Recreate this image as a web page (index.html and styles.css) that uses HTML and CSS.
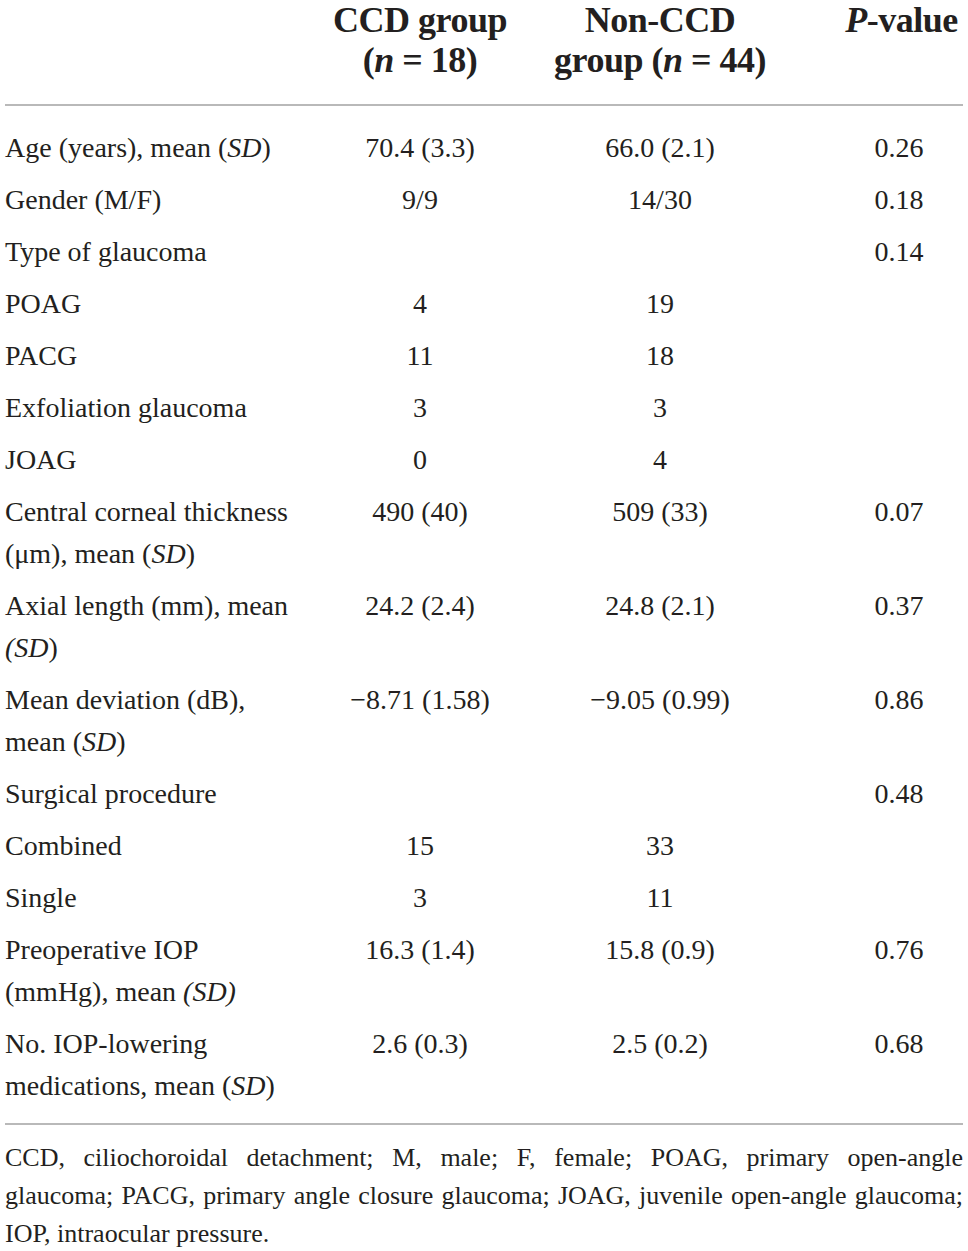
FILE: index.html
```html
<!DOCTYPE html>
<html lang="en">
<head>
  <meta charset="UTF-8">
  <meta name="viewport" content="width=device-width, initial-scale=1.0">
  <title>Baseline characteristics</title>
  <link rel="stylesheet" href="styles.css">
</head>
<body>
  <div class="sheet">
    <table class="data">
      <colgroup>
        <col class="c-label">
        <col class="c-ccd">
        <col class="c-non">
        <col class="c-p">
      </colgroup>
      <thead>
        <tr>
          <th></th>
          <th>CCD group<br>(<i>n</i> = 18)</th>
          <th>Non-CCD<br>group (<i>n</i> = 44)</th>
          <th class="pcol"><i>P</i>-value</th>
        </tr>
      </thead>
      <tbody>
        <tr class="first"><td>Age (years), mean (<i>SD</i>)</td><td>70.4 (3.3)</td><td>66.0 (2.1)</td><td class="pcol">0.26</td></tr>
        <tr><td>Gender (M/F)</td><td>9/9</td><td>14/30</td><td class="pcol">0.18</td></tr>
        <tr><td>Type of glaucoma</td><td></td><td></td><td class="pcol">0.14</td></tr>
        <tr><td>POAG</td><td>4</td><td>19</td><td class="pcol"></td></tr>
        <tr><td>PACG</td><td>11</td><td>18</td><td class="pcol"></td></tr>
        <tr><td>Exfoliation glaucoma</td><td>3</td><td>3</td><td class="pcol"></td></tr>
        <tr><td>JOAG</td><td>0</td><td>4</td><td class="pcol"></td></tr>
        <tr><td>Central corneal thickness<br>(&mu;m), mean (<i>SD</i>)</td><td>490 (40)</td><td>509 (33)</td><td class="pcol">0.07</td></tr>
        <tr><td>Axial length (mm), mean<br><i>(SD</i>)</td><td>24.2 (2.4)</td><td>24.8 (2.1)</td><td class="pcol">0.37</td></tr>
        <tr><td>Mean deviation (dB),<br>mean (<i>SD</i>)</td><td>&minus;8.71 (1.58)</td><td>&minus;9.05 (0.99)</td><td class="pcol">0.86</td></tr>
        <tr><td>Surgical procedure</td><td></td><td></td><td class="pcol">0.48</td></tr>
        <tr><td>Combined</td><td>15</td><td>33</td><td class="pcol"></td></tr>
        <tr><td>Single</td><td>3</td><td>11</td><td class="pcol"></td></tr>
        <tr><td>Preoperative IOP<br>(mmHg), mean <i>(SD)</i></td><td>16.3 (1.4)</td><td>15.8 (0.9)</td><td class="pcol">0.76</td></tr>
        <tr class="last"><td>No. IOP-lowering<br>medications, mean (<i>SD</i>)</td><td>2.6 (0.3)</td><td>2.5 (0.2)</td><td class="pcol">0.68</td></tr>
      </tbody>
    </table>
    <div class="notes">
      <span class="line just">CCD, ciliochoroidal detachment; M, male; F, female; POAG, primary open-angle</span>
      <span class="line just">glaucoma; PACG, primary angle closure glaucoma; JOAG, juvenile open-angle glaucoma;</span>
      <span class="line">IOP, intraocular pressure.</span>
    </div>
  </div>
</body>
</html>
```

FILE: styles.css
```css
body {
  margin: 0;
  background-color: #fff;
  color: #231f20;
  font-family: "Liberation Serif", "Times New Roman", serif;
}
.sheet {
  width: 958px;
  padding: 0 5px;
}
.data {
  width: 958px;
  border-collapse: collapse;
  table-layout: fixed;
}
.c-label {
  width: 305px;
}
.c-ccd {
  width: 220px;
}
.c-non {
  width: 260px;
}
.c-p {
  width: 173px;
}
.data th {
  font-size: 36px;
  line-height: 40px;
  font-weight: bold;
  text-align: center;
  vertical-align: top;
  padding: 0 0 24px 0;
  border-bottom: 2px solid #b9b9b9;
  letter-spacing: -0.5px;
}
.data td {
  font-size: 28px;
  line-height: 42px;
  padding: 5px 0;
  vertical-align: top;
  text-align: center;
}
.data td:first-child {
  text-align: left;
}
.data .pcol {
  padding-left: 45px;
}
.data th.pcol {
  padding-left: 50px;
}
.data tr.first td {
  padding-top: 21px;
}
.data tr.last td {
  padding-bottom: 16px;
  border-bottom: 2px solid #b9b9b9;
}
.notes {
  padding-top: 14px;
  font-size: 26px;
  line-height: 38px;
}
.notes .line {
  display: block;
}
.notes .just {
  text-align: justify;
  text-align-last: justify;
}
```
